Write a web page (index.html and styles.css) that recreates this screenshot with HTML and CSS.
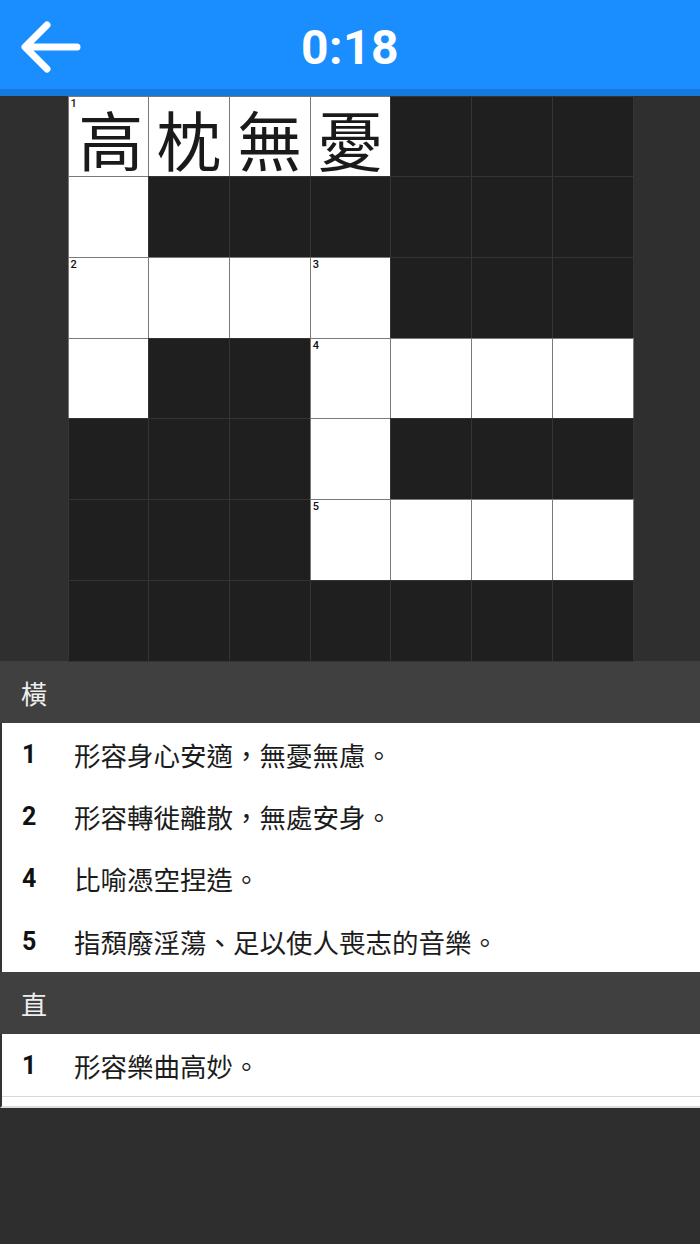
FILE: index.html
```html
<!DOCTYPE html>
<html lang="zh-Hant">
<head>
<meta charset="utf-8">
<title>0:18</title>
<link rel="stylesheet" href="styles.css">
</head>
<body>
<header class="topbar">
  <svg class="back" viewBox="0 0 64 56" width="64" height="56" aria-hidden="true">
    <path d="M58 28 H8 M28 6 L6 28 L28 50" fill="none" stroke="#fff" stroke-width="7" stroke-linecap="round" stroke-linejoin="round"/>
  </svg>
  <div class="timer">0:18</div>
</header>
<main class="board">
  <div class="grid">
    <div class="cell w"><span class="num">1</span><span class="ch first">高</span></div>
    <div class="cell w"><span class="ch">枕</span></div>
    <div class="cell w"><span class="ch">無</span></div>
    <div class="cell w"><span class="ch">憂</span></div>
    <div class="cell d"></div><div class="cell d"></div><div class="cell d"></div>

    <div class="cell w"></div>
    <div class="cell d"></div><div class="cell d"></div><div class="cell d"></div><div class="cell d"></div><div class="cell d"></div><div class="cell d"></div>

    <div class="cell w"><span class="num">2</span></div>
    <div class="cell w"></div>
    <div class="cell w"></div>
    <div class="cell w"><span class="num">3</span></div>
    <div class="cell d"></div><div class="cell d"></div><div class="cell d"></div>

    <div class="cell w"></div>
    <div class="cell d"></div><div class="cell d"></div>
    <div class="cell w"><span class="num">4</span></div>
    <div class="cell w"></div><div class="cell w"></div><div class="cell w"></div>

    <div class="cell d"></div><div class="cell d"></div><div class="cell d"></div>
    <div class="cell w"></div>
    <div class="cell d"></div><div class="cell d"></div><div class="cell d"></div>

    <div class="cell d"></div><div class="cell d"></div><div class="cell d"></div>
    <div class="cell w"><span class="num">5</span></div>
    <div class="cell w"></div><div class="cell w"></div><div class="cell w"></div>

    <div class="cell d"></div><div class="cell d"></div><div class="cell d"></div><div class="cell d"></div><div class="cell d"></div><div class="cell d"></div><div class="cell d"></div>
  </div>
</main>
<section class="clues">
  <div class="sec-head">橫</div>
  <ul class="list">
    <li class="clue"><span class="cn">1</span><span class="ct">形容身心安適，無憂無慮。</span></li>
    <li class="clue"><span class="cn">2</span><span class="ct">形容轉徙離散，無處安身。</span></li>
    <li class="clue"><span class="cn">4</span><span class="ct">比喻憑空捏造。</span></li>
    <li class="clue"><span class="cn">5</span><span class="ct">指頹廢淫蕩、足以使人喪志的音樂。</span></li>
  </ul>
  <div class="sec-head">直</div>
  <ul class="list last">
    <li class="clue"><span class="cn">1</span><span class="ct">形容樂曲高妙。</span></li>
  </ul>
  <div class="spacer"></div>
</section>
</body>
</html>
```
FILE: styles.css
```css
html, body {
  margin: 0;
  padding: 0;
}
body {
  background: #2e2e2e;
  font-family: Roboto, "Noto Sans CJK SC", sans-serif;
  width: 700px;
  min-height: 1244px;
}
.topbar {
  height: 89px;
  background: #1a8dff;
  border-bottom: 7px solid #1679dc;
  display: flex;
  align-items: center;
  justify-content: center;
  position: relative;
}
.back {
  position: absolute;
  left: 19px;
  top: 19px;
}
.timer {
  color: #fff;
  font-family: Roboto, sans-serif;
  font-weight: 700;
  font-size: 48px;
  letter-spacing: 0.5px;
  margin-top: 6px;
}
.board {
  background: #2f2f2f;
  padding-left: 68px;
  height: 565px;
}
.grid {
  width: 565px;
  height: 565px;
  display: grid;
  grid-template-columns: repeat(7, 1fr);
  grid-template-rows: repeat(7, 1fr);
}
.cell {
  position: relative;
  box-sizing: border-box;
  display: flex;
  align-items: center;
  justify-content: center;
}
.cell.w {
  background: #fff;
  border: 1px solid #7a7a7a;
  margin: -0.5px;
}
.cell.d {
  background: #1f1f1f;
  border: 1px solid #343434;
  margin: -0.5px;
}
.num {
  position: absolute;
  left: 2px;
  top: 1px;
  font-family: Roboto, sans-serif;
  font-weight: 500;
  font-size: 11px;
  color: #111;
  line-height: 1;
}
.ch {
  font-family: "Noto Sans CJK SC", sans-serif;
  font-size: 65px;
  color: #1a1a1a;
  line-height: 0.85;
  margin-top: 4px;
}
.ch.first {
  margin-left: 5px;
}
.clues {
  display: flex;
  flex-direction: column;
}
.sec-head {
  height: 62px;
  background: #404040;
  color: #eeeeee;
  font-family: "Noto Sans CJK SC", sans-serif;
  font-size: 26px;
  display: flex;
  align-items: center;
  padding-left: 21px;
}
.list {
  list-style: none;
  margin: 0;
  padding: 0;
  background: #fff;
  border-left: 2px solid #333;
}
.clue {
  height: 62.3px;
  display: flex;
  align-items: center;
}
.cn {
  width: 72px;
  padding-left: 20px;
  box-sizing: border-box;
  font-family: Roboto, sans-serif;
  font-weight: 700;
  font-size: 25px;
  color: #111;
}
.ct {
  font-family: "Noto Sans CJK SC", sans-serif;
  font-size: 26.5px;
  color: #1c1c1c;
}
.list.last .clue {
  height: 62px;
  border-bottom: 1px solid #d8d8d8;
}
.spacer {
  height: 9px;
  background: #fff;
  border-bottom: 2px solid #dcdcdc;
  border-left: 2px solid #333;
}
```
